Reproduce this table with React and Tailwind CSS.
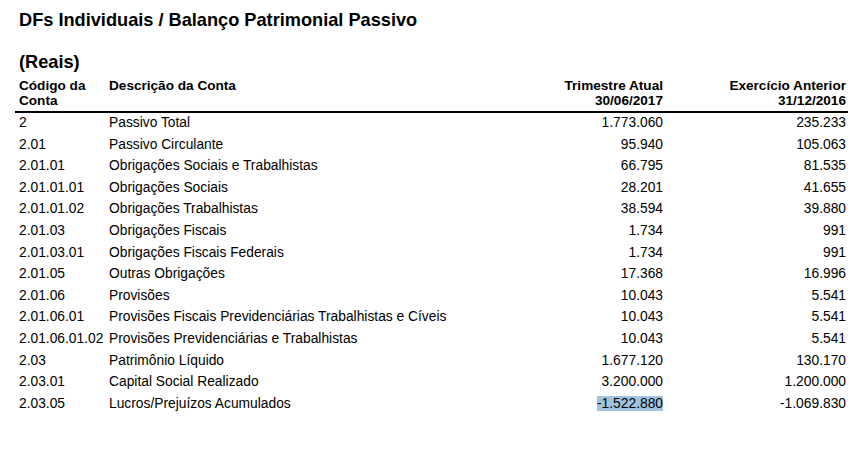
const ROWS = [
  ['2', 'Passivo Total', '1.773.060', '235.233'],
  ['2.01', 'Passivo Circulante', '95.940', '105.063'],
  ['2.01.01', 'Obrigações Sociais e Trabalhistas', '66.795', '81.535'],
  ['2.01.01.01', 'Obrigações Sociais', '28.201', '41.655'],
  ['2.01.01.02', 'Obrigações Trabalhistas', '38.594', '39.880'],
  ['2.01.03', 'Obrigações Fiscais', '1.734', '991'],
  ['2.01.03.01', 'Obrigações Fiscais Federais', '1.734', '991'],
  ['2.01.05', 'Outras Obrigações', '17.368', '16.996'],
  ['2.01.06', 'Provisões', '10.043', '5.541'],
  ['2.01.06.01', 'Provisões Fiscais Previdenciárias Trabalhistas e Cíveis', '10.043', '5.541'],
  ['2.01.06.01.02', 'Provisões Previdenciárias e Trabalhistas', '10.043', '5.541'],
  ['2.03', 'Patrimônio Líquido', '1.677.120', '130.170'],
  ['2.03.01', 'Capital Social Realizado', '3.200.000', '1.200.000'],
  ['2.03.05', 'Lucros/Prejuízos Acumulados', '-1.522.880', '-1.069.830'],
]

export default function App() {
  return (
    <div className="w-[865px] h-[457px] bg-white text-black font-['Liberation_Sans',Arial,sans-serif] overflow-hidden">
      <div className="pl-[19px] pt-[10px] text-[18.2px] leading-[20px] font-bold whitespace-nowrap">
        DFs Individuais / Balanço Patrimonial Passivo
      </div>
      <div className="pl-[19px] mt-[22px] text-[18.2px] leading-[20px] font-bold">(Reais)</div>

      <div className="ml-[15px] w-[833px] mt-[6px]">
        {/* header */}
        <div className="flex border-b-2 border-black pb-[3px] text-[13.6px] leading-[15px] font-bold whitespace-nowrap">
          <div className="w-[90px] pl-[4px]">Código da<br />Conta</div>
          <div className="flex-1 pl-[4px]">Descrição da Conta</div>
          <div className="w-[160px] pr-[3px] text-right">Trimestre Atual<br />30/06/2017</div>
          <div className="w-[182px] pr-[2px] text-right">Exercício Anterior<br />31/12/2016</div>
        </div>

        {/* rows */}
        <div className="-mt-px text-[13.8px] leading-[21.6px]">
          {ROWS.map(([code, desc, cur, prev], i) => (
            <div key={code} className="flex whitespace-nowrap">
              <div className="w-[90px] pl-[4px]">{code}</div>
              <div className="flex-1 pl-[4px]">{desc}</div>
              <div className="w-[160px] pr-[3px] text-right">
                {i === ROWS.length - 1
                  ? <span className="bg-[#a0c4e0]">{cur}</span>
                  : cur}
              </div>
              <div className="w-[182px] pr-[2px] text-right">{prev}</div>
            </div>
          ))}
        </div>
      </div>
    </div>
  )
}
